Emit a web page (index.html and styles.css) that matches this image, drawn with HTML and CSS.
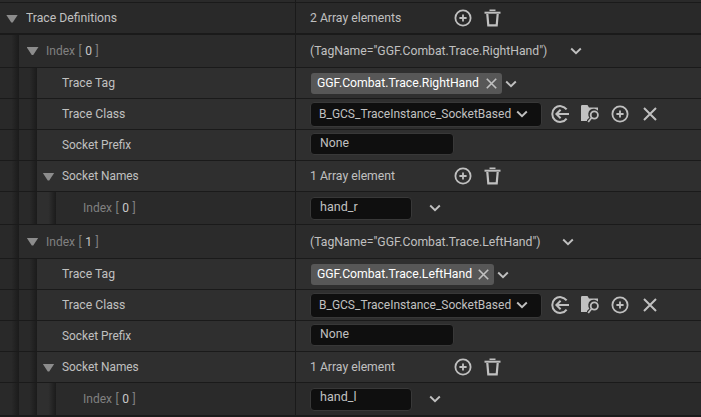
FILE: index.html
```
<!DOCTYPE html>
<html lang="en">
<head>
<meta charset="utf-8">
<title>Trace Definitions</title>
<link rel="stylesheet" href="styles.css">
</head>
<body>
<svg class="defs" width="0" height="0" aria-hidden="true">
  <symbol id="plus" viewBox="0 0 18 18"><circle cx="9" cy="9" r="7.6"/><path d="M9 5.4v7.2M5.4 9h7.2"/></symbol>
  <symbol id="trash" viewBox="0 0 18 18"><path d="M.5 3.7h16" stroke-width="2"/><path d="M5.500 1.300h6" stroke-width="1.600"/><path d="M3.300 5l1 11.300h8.400L13.700 5" stroke-width="2.200"/></symbol>
  <symbol id="chev" viewBox="0 0 12 8"><path d="M1.2 1.5L6 6.2l4.800-4.700"/></symbol>
  <symbol id="use" viewBox="0 0 18 18"><path d="M15.600 4.400A7.900 7.900 0 1 0 15.600 13.600M18 9H5.500M9.600 4.800L5.400 9l4.200 4.200" stroke-width="2"/></symbol>
  <symbol id="browse" viewBox="0 0 18 18"><path class="solid" d="M0 1.200Q0 0 1.200 0H6.500L8 2.600H17V5.800A5.400 5.400 0 0 0 8.400 12.500L6 15V16H0Z"/><circle cx="13.300" cy="10" r="3.600"/><path d="M10.600 12.800L7.200 17"/></symbol>
  <symbol id="cross" viewBox="0 0 14 14"><path d="M1 1l12 12M13 1L1 13"/></symbol>
</svg>
<main class="tree">
  <div class="row sliver"><div class="name"></div><div class="value"></div></div>
  <div class="row top">
    <div class="name"><i class="arrow"></i><span class="t">Trace Definitions</span></div>
    <div class="value"><span class="count"><span class="t">2 Array elements</span></span><svg class="ic plus"><use href="#plus"/></svg><svg class="ic"><use href="#trash"/></svg></div>
  </div>
  <div class="row index">
    <div class="name"><b class="gut"></b><i class="arrow"></i><span class="t dim">Index [ <em>0</em> ]</span></div>
    <div class="value"><span class="tagname right"><span class="t">(TagName="GGF.Combat.Trace.RightHand")</span></span><svg class="chev"><use href="#chev"/></svg></div>
  </div>
  <div class="row leaf">
    <div class="name"><b class="gut"></b><b class="gut"></b><span class="t">Trace Tag</span></div>
    <div class="value"><span class="chip right"><span class="t">GGF.Combat.Trace.RightHand</span><svg class="x"><use href="#cross"/></svg></span><svg class="chev near"><use href="#chev"/></svg></div>
  </div>
  <div class="row leaf">
    <div class="name"><b class="gut"></b><b class="gut"></b><span class="t">Trace Class</span></div>
    <div class="value"><span class="combo"><span class="t">B_GCS_TraceInstance_SocketBased</span><svg class="chev"><use href="#chev"/></svg></span><span class="tools"><svg class="ic"><use href="#use"/></svg><svg class="ic"><use href="#browse"/></svg><svg class="ic"><use href="#plus"/></svg><svg class="close"><use href="#cross"/></svg></span></div>
  </div>
  <div class="row leaf">
    <div class="name"><b class="gut"></b><b class="gut"></b><span class="t tight">Socket Prefix</span></div>
    <div class="value"><span class="field wide"><span class="t">None</span></span></div>
  </div>
  <div class="row leaf">
    <div class="name"><b class="gut"></b><b class="gut"></b><i class="arrow"></i><span class="t tight">Socket Names</span></div>
    <div class="value"><span class="count"><span class="t">1 Array element</span></span><svg class="ic plus"><use href="#plus"/></svg><svg class="ic"><use href="#trash"/></svg></div>
  </div>
  <div class="row item">
    <div class="name"><b class="gut"></b><b class="gut"></b><b class="gut lit"></b><span class="t dim">Index [ <em>0</em> ]</span></div>
    <div class="value"><span class="field"><span class="t loose">hand_r</span></span><svg class="chev"><use href="#chev"/></svg></div>
  </div>
  <div class="row index second">
    <div class="name"><b class="gut"></b><i class="arrow"></i><span class="t dim">Index [ <em>1</em> ]</span></div>
    <div class="value"><span class="tagname"><span class="t">(TagName="GGF.Combat.Trace.LeftHand")</span></span><svg class="chev"><use href="#chev"/></svg></div>
  </div>
  <div class="row leaf">
    <div class="name"><b class="gut"></b><b class="gut"></b><span class="t">Trace Tag</span></div>
    <div class="value"><span class="chip"><span class="t">GGF.Combat.Trace.LeftHand</span><svg class="x"><use href="#cross"/></svg></span><svg class="chev near"><use href="#chev"/></svg></div>
  </div>
  <div class="row leaf">
    <div class="name"><b class="gut"></b><b class="gut"></b><span class="t">Trace Class</span></div>
    <div class="value"><span class="combo"><span class="t">B_GCS_TraceInstance_SocketBased</span><svg class="chev"><use href="#chev"/></svg></span><span class="tools"><svg class="ic"><use href="#use"/></svg><svg class="ic"><use href="#browse"/></svg><svg class="ic"><use href="#plus"/></svg><svg class="close"><use href="#cross"/></svg></span></div>
  </div>
  <div class="row leaf">
    <div class="name"><b class="gut"></b><b class="gut"></b><span class="t tight">Socket Prefix</span></div>
    <div class="value"><span class="field wide"><span class="t">None</span></span></div>
  </div>
  <div class="row leaf">
    <div class="name"><b class="gut"></b><b class="gut"></b><i class="arrow"></i><span class="t tight">Socket Names</span></div>
    <div class="value"><span class="count"><span class="t">1 Array element</span></span><svg class="ic plus"><use href="#plus"/></svg><svg class="ic"><use href="#trash"/></svg></div>
  </div>
  <div class="row item">
    <div class="name"><b class="gut"></b><b class="gut"></b><b class="gut lit"></b><span class="t dim">Index [ <em>0</em> ]</span></div>
    <div class="value"><span class="field high"><span class="t loose">hand_l</span></span><svg class="chev"><use href="#chev"/></svg></div>
  </div>
</main>
</body>
</html>
```
FILE: styles.css
```
* { box-sizing: border-box; }
body { margin: 0; background: #1b1b1b; font: 13px/16px Roboto, "Liberation Sans", sans-serif; color: #c0c0c0; }
.defs { position: absolute; }
svg { fill: none; stroke: #c0c0c0; stroke-width: 1.8; flex: none; display: block; }
.solid { fill: #c0c0c0; stroke: none; }
.tree { height: 417px; overflow: hidden; }
.row { display: grid; grid-template-columns: 296px 1fr; height: 31px; border-bottom: 1px solid #1a1a1a; background: #2f2f2f; }
.sliver { height: 3px; background: #2a2a2a; }
.top { height: 32px; background: #292929; border-bottom-width: 2px; }
.index { height: 33px; background: #2b2b2b; }
.index.second { height: 34px; }
.item { height: 33px; background: #2a2a2a; }
.name, .value { display: flex; align-items: center; min-width: 0; }
.name { border-right: 1px solid #1a1a1a; }
.value { padding-left: 14px; }
.t { display: block; white-space: pre; flex: none; transform: scaleX(.938); transform-origin: 0 50%; }
.tight { transform: scaleX(.912); }
.loose { transform: scaleX(.965); }
.dim { color: #808080; word-spacing: .6px; transform: scaleX(.925); }
em { font-style: normal; color: #c8c8c8; }
.gut { align-self: stretch; width: 18px; flex: none; background: linear-gradient(90deg, #292929 60%, #1b1b1b); }
.gut:first-child { width: 19px; }
.gut.lit { width: 19px; background: linear-gradient(90deg, #2f2f2f 60%, #1b1b1b); }
.arrow { width: 12px; height: 8px; flex: none; background: #8c8c8c; clip-path: polygon(0 0, 100% 0, 56% 100%, 44% 100%); margin: 1px 8px 0 6px; }
.index .arrow { margin: 0 7.5px 0 7.5px; }
.leaf .arrow { margin: 1px 7.5px 0 5.5px; }
.gut:nth-child(2) + .t { margin-left: 25px; }
.lit + .t { margin-left: 27px; }
.count { width: 144px; }
.ic { width: 18px; height: 18px; }
.plus { margin-right: 12px; }
.chev { width: 12px; height: 8px; stroke-width: 1.9; }
.tagname { width: 251px; flex: none; }
.tagname.right { width: 259px; }
.index .chev { margin-left: .5px; }
.chip { display: flex; align-items: center; width: 183px; height: 21px; margin-left: 1px; padding-left: 6px; border-radius: 3px; background: #575757; color: #fff; }
.chip.right { width: 191px; }
.chip .t { margin-right: -10px; }
.chip .x { width: 11px; height: 11px; margin-left: auto; margin-right: 5px; stroke-width: 2.1; }
.near { margin: 2px 0 0 3px; }
.combo { display: flex; align-items: center; width: 232px; height: 25px; padding: 0 13px 0 8px; border: 1px solid #383838; border-radius: 4px; background: #0f0f0f; }
.combo .t { margin-right: -16px; transform: scaleX(.923); }
.combo .chev { margin-left: auto; }
.tools { display: flex; align-items: center; gap: 12px; margin-left: 9px; }
.close { width: 14px; height: 14px; margin-left: 2px; stroke-width: 2; }
.field { display: flex; width: 102px; height: 23px; padding: 1px 9px; border: 1px solid #383838; border-radius: 4px; background: #0f0f0f; }
.field.wide { width: 144px; height: 22px; margin-bottom: 2px; }
.field.high { padding-top: 0; }
.field + .chev { margin: 0 0 0 17px; }
```
